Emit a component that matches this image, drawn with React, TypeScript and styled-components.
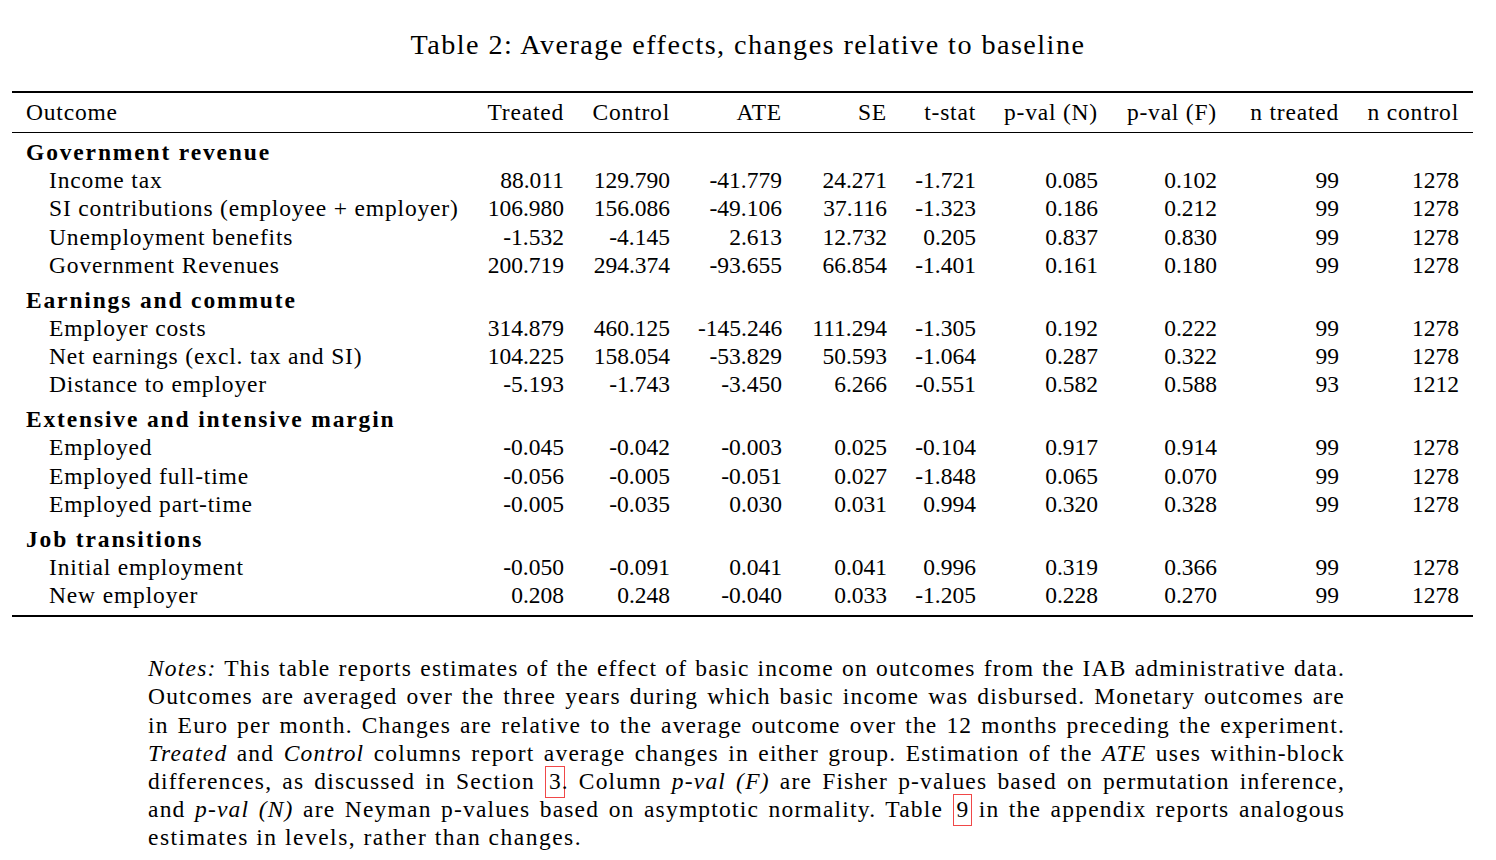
import React from "react";
import styled, { createGlobalStyle } from "styled-components";

const GlobalStyle = createGlobalStyle`
  *, *::before, *::after { box-sizing: border-box; }
  html, body { margin: 0; padding: 0; background: #ffffff; }
  body {
    color: #000000;
    font-family: "Liberation Serif", "Times New Roman", serif;
    -webkit-font-smoothing: antialiased;
  }
`;

const Page = styled.div`
  width: 1496px;
  display: flex;
  flex-direction: column;
  align-items: stretch;
  padding-top: 28px;
`;

const Caption = styled.div`
  text-align: center;
  font-size: 28.2px;
  letter-spacing: 1.45px;
  line-height: 34px;
  height: 34px;
`;

const DataTable = styled.table`
  margin: 29px 0 0 12px;
  width: 1461px;
  table-layout: fixed;
  border-collapse: separate;
  border-spacing: 0;
  font-size: 23.5px;
`;

const Col = styled.col<{ $w: number }>`
  width: ${(p) => p.$w}px;
`;

const HeadCell = styled.th<{ $left?: boolean }>`
  font-weight: normal;
  text-align: ${(p) => (p.$left ? "left" : "right")};
  padding: 0 14px;
  line-height: 39px;
  letter-spacing: 0.8px;
  white-space: nowrap;
  border-top: 2px solid #000;
  border-bottom: 1px solid #000;
`;

const SectionCell = styled.td<{ $first?: boolean }>`
  font-weight: bold;
  letter-spacing: 1.85px;
  white-space: nowrap;
  line-height: 28.2px;
  padding: ${(p) => (p.$first ? "5px" : "6.7px")} 14px 0 14px;
`;

const Cell = styled.td<{ $label?: boolean; $last?: boolean }>`
  line-height: 28.2px;
  white-space: nowrap;
  text-align: ${(p) => (p.$label ? "left" : "right")};
  letter-spacing: ${(p) => (p.$label ? "0.85px" : "0")};
  padding: 0 14px 0 ${(p) => (p.$label ? "37px" : "14px")};
  padding-bottom: ${(p) => (p.$last ? "6px" : "0")};
  border-bottom: ${(p) => (p.$last ? "2px solid #000" : "none")};
`;

const Notes = styled.div`
  margin: 37px 0 0 148px;
  width: 1197px;
  font-size: 23.5px;
  letter-spacing: 1.2px;
`;

const NoteLine = styled.div<{ $justify?: boolean }>`
  height: 28.17px;
  line-height: 28.17px;
  white-space: nowrap;
  text-align: ${(p) => (p.$justify ? "justify" : "left")};
  text-align-last: ${(p) => (p.$justify ? "justify" : "left")};
`;

const LastLine = styled(NoteLine)`
  letter-spacing: 1.5px;
`;

const Em = styled.i`
  font-style: italic;
`;

const Ref = styled.span`
  display: inline-block;
  border: 1px solid #f04848;
  padding: 3px 3px 5px 3px;
  line-height: 22px;
  margin: -6px -3px -6px 0;
  letter-spacing: 0;
`;

type DataRow = [string, string, string, string, string, string, string, string, string, string];

const sections: { title: string; rows: DataRow[] }[] = [
  {
    title: "Government revenue",
    rows: [
      ["Income tax", "88.011", "129.790", "-41.779", "24.271", "-1.721", "0.085", "0.102", "99", "1278"],
      ["SI contributions (employee + employer)", "106.980", "156.086", "-49.106", "37.116", "-1.323", "0.186", "0.212", "99", "1278"],
      ["Unemployment benefits", "-1.532", "-4.145", "2.613", "12.732", "0.205", "0.837", "0.830", "99", "1278"],
      ["Government Revenues", "200.719", "294.374", "-93.655", "66.854", "-1.401", "0.161", "0.180", "99", "1278"],
    ],
  },
  {
    title: "Earnings and commute",
    rows: [
      ["Employer costs", "314.879", "460.125", "-145.246", "111.294", "-1.305", "0.192", "0.222", "99", "1278"],
      ["Net earnings (excl. tax and SI)", "104.225", "158.054", "-53.829", "50.593", "-1.064", "0.287", "0.322", "99", "1278"],
      ["Distance to employer", "-5.193", "-1.743", "-3.450", "6.266", "-0.551", "0.582", "0.588", "93", "1212"],
    ],
  },
  {
    title: "Extensive and intensive margin",
    rows: [
      ["Employed", "-0.045", "-0.042", "-0.003", "0.025", "-0.104", "0.917", "0.914", "99", "1278"],
      ["Employed full-time", "-0.056", "-0.005", "-0.051", "0.027", "-1.848", "0.065", "0.070", "99", "1278"],
      ["Employed part-time", "-0.005", "-0.035", "0.030", "0.031", "0.994", "0.320", "0.328", "99", "1278"],
    ],
  },
  {
    title: "Job transitions",
    rows: [
      ["Initial employment", "-0.050", "-0.091", "0.041", "0.041", "0.996", "0.319", "0.366", "99", "1278"],
      ["New employer", "0.208", "0.248", "-0.040", "0.033", "-1.205", "0.228", "0.270", "99", "1278"],
    ],
  },
];

const headers = ["Treated", "Control", "ATE", "SE", "t-stat", "p-val (N)", "p-val (F)", "n treated", "n control"];
const widths = [459, 107, 106, 112, 105, 89, 122, 119, 122, 120];

export default function App() {
  const lastSection = sections.length - 1;
  return (
    <>
      <GlobalStyle />
      <Page>
        <Caption>Table 2: Average effects, changes relative to baseline</Caption>
        <DataTable>
          <colgroup>
            {widths.map((w, i) => (
              <Col key={i} $w={w} />
            ))}
          </colgroup>
          <thead>
            <tr>
              <HeadCell $left>Outcome</HeadCell>
              {headers.map((h) => (
                <HeadCell key={h}>{h}</HeadCell>
              ))}
            </tr>
          </thead>
          <tbody>
            {sections.map((s, si) => (
              <React.Fragment key={s.title}>
                <tr>
                  <SectionCell $first={si === 0} colSpan={10}>
                    {s.title}
                  </SectionCell>
                </tr>
                {s.rows.map((r, ri) => {
                  const last = si === lastSection && ri === s.rows.length - 1;
                  return (
                    <tr key={r[0]}>
                      {r.map((v, ci) => (
                        <Cell key={ci} $label={ci === 0} $last={last}>
                          {v}
                        </Cell>
                      ))}
                    </tr>
                  );
                })}
              </React.Fragment>
            ))}
          </tbody>
        </DataTable>
        <Notes>
          <NoteLine $justify>
            <Em>Notes:</Em> This table reports estimates of the effect of basic income on outcomes from the IAB administrative data.
          </NoteLine>
          <NoteLine $justify>
            Outcomes are averaged over the three years during which basic income was disbursed. Monetary outcomes are
          </NoteLine>
          <NoteLine $justify>
            in Euro per month. Changes are relative to the average outcome over the 12 months preceding the experiment.
          </NoteLine>
          <NoteLine $justify>
            <Em>Treated</Em> and <Em>Control</Em> columns report average changes in either group. Estimation of the <Em>ATE</Em> uses within-block
          </NoteLine>
          <NoteLine $justify>
            differences, as discussed in Section <Ref>3</Ref>. Column <Em>p-val (F)</Em> are Fisher p-values based on permutation inference,
          </NoteLine>
          <NoteLine $justify>
            and <Em>p-val (N)</Em> are Neyman p-values based on asymptotic normality. Table <Ref>9</Ref> in the appendix reports analogous
          </NoteLine>
          <LastLine>estimates in levels, rather than changes.</LastLine>
        </Notes>
      </Page>
    </>
  );
}
